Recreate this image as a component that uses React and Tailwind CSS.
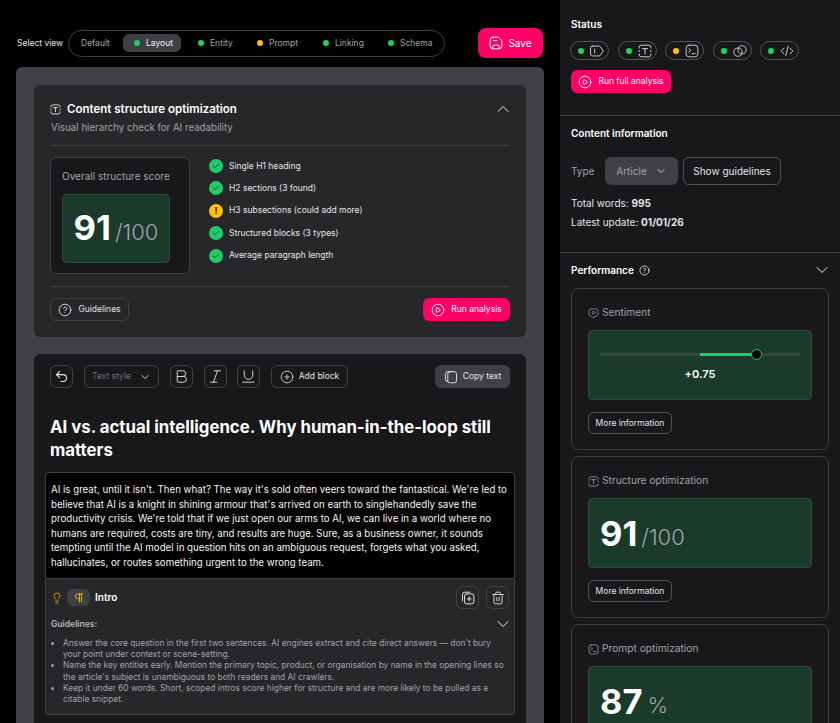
import {
  Undo2,
  Bold,
  Italic,
  Underline,
  CirclePlus,
  ChevronDown,
  ChevronUp,
  CirclePlay,
  CircleHelp,
  Lightbulb,
  Pilcrow,
  Trash2,
  Check,
} from "lucide-react";

function TypeBox({ className }) {
  return (
    <svg viewBox="0 0 24 24" fill="none" stroke="currentColor" strokeWidth="1.7" strokeLinecap="round" className={className}>
      <path d="M2 7V6a4 4 0 0 1 4-4h12a4 4 0 0 1 4 4v1M2 17v1a4 4 0 0 0 4 4h12a4 4 0 0 0 4-4v-1M2 11v2M22 11v2" />
      <path d="M7.500 8h9M12 8v9" />
    </svg>
  );
}

function TerminalBox({ className }) {
  return (
    <svg viewBox="0 0 24 24" fill="none" stroke="currentColor" strokeWidth="1.6" strokeLinecap="round" strokeLinejoin="round" className={className}>
      <rect x="2" y="2" width="20" height="20" rx="5" />
      <path d="m6.500 8 3.500 3-3.500 3M12 16.500h5.500" />
    </svg>
  );
}

function TagBox({ className }) {
  return (
    <svg viewBox="0 0 24 24" fill="none" stroke="currentColor" strokeWidth="1.6" strokeLinecap="round" strokeLinejoin="round" className={className}>
      <path d="M4 3.500h12.500L23 12l-6.500 8.500H4a3 3 0 0 1-3-3v-11a3 3 0 0 1 3-3Z" />
      <path d="M8 8.500v7" />
    </svg>
  );
}

function Rings({ className }) {
  return (
    <svg viewBox="0 0 24 24" fill="none" stroke="currentColor" strokeWidth="1.5" className={className}>
      <circle cx="8.500" cy="14" r="7" />
      <circle cx="15.500" cy="10" r="7" />
    </svg>
  );
}

function CodeMark({ className }) {
  return (
    <svg viewBox="0 0 24 24" fill="none" stroke="currentColor" strokeWidth="1.6" strokeLinecap="round" strokeLinejoin="round" className={className}>
      <path d="m7 7-5 5 5 5M17 7l5 5-5 5M14 4l-4 16" />
    </svg>
  );
}

function HeartBubble({ className }) {
  return (
    <svg viewBox="0 0 24 24" fill="none" stroke="currentColor" strokeWidth="1.6" strokeLinejoin="round" className={className}>
      <path d="M7 2h10a5 5 0 0 1 5 5v7a5 5 0 0 1-5 4h-2l-3 4-3-4H7a5 5 0 0 1-5-4V7a5 5 0 0 1 5-5Z" />
      <path d="M12 14 8.800 10.800a2 2 0 0 1 3.200-2.300 2 2 0 0 1 3.200 2.300Z" />
    </svg>
  );
}

function SaveIcon({ className }) {
  return (
    <svg viewBox="0 0 24 24" fill="none" stroke="currentColor" strokeWidth="1.7" strokeLinecap="round" strokeLinejoin="round" className={className}>
      <path d="M7 2h9l6 6v9a5 5 0 0 1-5 5H7a5 5 0 0 1-5-5V7a5 5 0 0 1 5-5Z" />
      <path d="M7.500 8h6M6.500 22v-3.500a3 3 0 0 1 3-3h5a3 3 0 0 1 3 3V22" />
    </svg>
  );
}

function CopyAdd({ className }) {
  return (
    <svg viewBox="0 0 24 24" fill="none" stroke="currentColor" strokeWidth="1.7" strokeLinecap="round" className={className}>
      <rect x="6" y="5" width="16" height="17" rx="3.500" />
      <path d="M2.500 17V6a4 4 0 0 1 4-4h9M14 10v7M10.500 13.500h7" />
    </svg>
  );
}

function CopyStack({ className }) {
  return (
    <svg viewBox="0 0 24 24" fill="none" stroke="currentColor" strokeWidth="1.6" strokeLinecap="round" className={className}>
      <rect x="6.500" y="3" width="15" height="19" rx="3.500" />
      <path d="M6.500 20A4 4 0 0 1 2.500 16V7.500A5 5 0 0 1 7.500 2.500H15" />
    </svg>
  );
}

const tabs = [
  { label: "Entity", dot: "bg-[#20cf6b]", w: "w-[59px]" },
  { label: "Prompt", dot: "bg-[#ffc107]", w: "w-[66px]" },
  { label: "Linking", dot: "bg-[#20cf6b]", w: "w-[65px]" },
  { label: "Schema", dot: "bg-[#20cf6b]", w: "w-[66px]" },
];

const checks = [
  { label: "Single H1 heading", ok: true },
  { label: "H2 sections (3 found)", ok: true },
  { label: "H3 subsections (could add more)", ok: false },
  { label: "Structured blocks (3 types)", ok: true },
  { label: "Average paragraph length", ok: true },
];

const statusIcons = [
  { icon: TagBox, dot: "bg-[#20cf6b]" },
  { icon: TypeBox, dot: "bg-[#20cf6b]" },
  { icon: TerminalBox, dot: "bg-[#ffc107]" },
  { icon: Rings, dot: "bg-[#20cf6b]" },
  { icon: CodeMark, dot: "bg-[#20cf6b]" },
];

const guidelines = [
  "Answer the core question in the first two sentences. AI engines extract and cite direct answers — don't bury your point under context or scene-setting.",
  "Name the key entities early. Mention the primary topic, product, or organisation by name in the opening lines so the article's subject is unambiguous to both readers and AI crawlers.",
  "Keep it under 60 words. Short, scoped intros score higher for structure and are more likely to be pulled as a citable snippet.",
];

function IconButton({ children }) {
  return (
    <button className="flex h-[23px] w-[23px] items-center justify-center rounded-md border border-[#3f3f46] text-[#e4e4e7]">
      {children}
    </button>
  );
}

function PerfCard({ icon: Icon, title, children }) {
  return (
    <div className="rounded-lg border border-[#3f3f46] px-4 pt-4 pb-[15px]">
      <div className="flex h-4 items-center gap-[3px] text-[10.2px] text-[#a1a1aa]">
        <Icon className="h-[11px] w-[11px]" />
        {title}
      </div>
      <div className="mt-[9px] h-[70px] overflow-hidden rounded border border-[#2f4a3a] bg-[#1a3a2a]">{children}</div>
      <button className="mt-[12px] flex h-[22px] w-[84px] items-center justify-center rounded-md border border-[#52525b] text-[8.5px] text-[#e4e4e7]">
        More information
      </button>
    </div>
  );
}

export default function App() {
  return (
    <div className="flex h-[723px] w-[840px] overflow-hidden bg-black font-['Inter',sans-serif] text-white">
      <div className="w-[560px] shrink-0 pl-4 pr-4 pt-7">
        <div className="flex h-[30px] items-center">
          <span className="w-[52px] pl-[1px] text-[8.5px] text-[#e4e4e7]">Select view</span>
          <div className="flex h-[27px] w-[377px] items-center rounded-[14px] border border-[#3f3f46] pl-1 text-[8.5px] text-[#a1a1aa]">
            <span className="w-[50px] pl-[8px]">Default</span>
            <span className="flex h-[18px] w-[58px] items-center gap-[6px] rounded-md bg-[#3f3f46] pl-[11px] text-[#f4f4f5]">
              <span className="h-[6px] w-[6px] rounded-full bg-[#20cf6b]" />
              Layout
            </span>
            {tabs.map((t) => (
              <span key={t.label} className={`flex items-center gap-[6px] pl-[17px] ${t.w}`}>
                <span className={`h-[6px] w-[6px] shrink-0 rounded-full ${t.dot}`} />
                {t.label}
              </span>
            ))}
          </div>
          <button className="mr-[1px] ml-auto flex h-[30px] w-[65px] items-center justify-center gap-[5px] rounded-lg bg-[#ff0066] text-[10px]">
            <SaveIcon className="h-[14px] w-[14px]" />
            Save
          </button>
        </div>

        <div className="mt-[9px] h-[700px] rounded-md bg-[#3f4046] px-[18px] pt-[18px]">
          <div className="h-[252px] rounded-md bg-[#27272a] px-4 pt-4">
            <div className="flex h-4 items-center">
              <TypeBox className="h-[11px] w-[11px]" />
              <span className="ml-[6px] text-[11.5px] leading-4 font-semibold">Content structure optimization</span>
              <ChevronUp className="ml-auto -mr-[3px] h-5 w-5 shrink-0" strokeWidth={1.1} />
            </div>
            <p className="mt-1 pl-px text-[9.7px] leading-[14px] text-[#a1a1aa]">Visual hierarchy check for AI readability</p>
            <div className="mt-[10px] border-t border-[#3f3f46]" />

            <div className="mt-[11px] flex h-[117px]">
              <div className="h-[117px] w-[140px] rounded-md border border-[#3f3f46] bg-[#18181b] px-[11px] pt-[11px]">
                <div className="text-[10px] leading-[14px] text-[#a1a1aa]">Overall structure score</div>
                <div className="mt-[11px] flex h-[69px] w-[108px] items-center justify-center rounded-sm border border-[#2f4a3a] bg-[#1a3a2a]">
                  <span className="text-[34.5px] leading-none font-bold">91</span>
                  <span className="ml-[4px] mt-[6px] text-[22px] leading-none font-light text-[#a1a1aa]">/100</span>
                </div>
              </div>
              <div className="ml-[19px] flex flex-col gap-[8.4px] pt-[2px]">
                {checks.map((c) => (
                  <div key={c.label} className="flex h-[14px] items-center gap-[6px] text-[8.5px] text-[#e4e4e7]">
                    {c.ok ? (
                      <span className="flex h-[14px] w-[14px] items-center justify-center rounded-full bg-[#20cc69] text-[#14532d]">
                        <Check className="h-[8px] w-[8px]" strokeWidth={3} />
                      </span>
                    ) : (
                      <span className="flex h-[14px] w-[14px] items-center justify-center rounded-full bg-[#ffc107] text-[9px] font-bold text-[#27272a]">
                        !
                      </span>
                    )}
                    {c.label}
                  </div>
                ))}
              </div>
            </div>

            <div className="mt-[12px] border-t border-[#3f3f46]" />
            <div className="mt-[11px] flex justify-between">
              <button className="flex h-[23px] w-[79px] items-center justify-center gap-[6px] rounded-md border border-[#3f3f46] text-[8.5px] text-[#e4e4e7]">
                <CircleHelp className="h-[14px] w-[14px]" strokeWidth={1.5} />
                Guidelines
              </button>
              <button className="flex h-[23px] w-[87px] items-center justify-center gap-[6px] rounded-md bg-[#ff0066] text-[8.5px]">
                <CirclePlay className="h-[14px] w-[14px]" strokeWidth={1.5} />
                Run analysis
              </button>
            </div>
          </div>

          <div className="mt-[17px] h-[500px] rounded-md bg-[#18181b] px-[11px] pt-[11px]">
            <div className="flex h-[23px] items-center px-[5px]">
              <IconButton>
                <Undo2 className="h-[15px] w-[15px]" strokeWidth={1.7} />
              </IconButton>
              <button className="ml-[11px] flex h-[23px] w-[75px] items-center justify-center gap-[8px] rounded-md border border-[#3f3f46] text-[8.5px] text-[#71717a]">
                Text style
                <ChevronDown className="h-[12px] w-[12px] text-[#e4e4e7]" strokeWidth={1.7} />
              </button>
              <div className="ml-[11px]">
                <IconButton>
                  <Bold className="h-[17px] w-[17px]" strokeWidth={1.3} />
                </IconButton>
              </div>
              <div className="ml-[11px]">
                <IconButton>
                  <Italic className="h-[17px] w-[17px]" strokeWidth={1.3} />
                </IconButton>
              </div>
              <div className="ml-[10px]">
                <IconButton>
                  <Underline className="h-[17px] w-[17px]" strokeWidth={1.3} />
                </IconButton>
              </div>
              <button className="ml-[11px] flex h-[23px] w-[77px] items-center justify-center gap-[5px] rounded-md border border-[#3f3f46] text-[8.5px] text-[#e4e4e7]">
                <CirclePlus className="h-[14px] w-[14px]" strokeWidth={1.4} />
                Add block
              </button>
              <button className="ml-auto flex h-[23px] w-[75px] items-center justify-center gap-[5px] rounded-md bg-[#3f4046] text-[8.5px] text-[#e4e4e7]">
                <CopyStack className="h-[14px] w-[14px]" />
                Copy text
              </button>
            </div>

            <h1 className="mt-[28px] px-[5px] text-[16.8px] leading-[23px] font-bold">
              AI vs. actual intelligence. Why human-in-the-loop still matters
            </h1>

            <div className="mt-[10px] h-[107px] rounded-t-sm border border-[#3f3f46] bg-black px-[5px] pt-[10px] text-[9.7px] leading-[14.6px] text-[#f4f4f5]">
              AI is great, until it isn't. Then what? The way it's sold often veers toward the fantastical. We're led to believe that AI is a knight in shining armour that's arrived on earth to singlehandedly save the productivity crisis. We're told that if we just open our arms to AI, we can live in a world where no humans are required, costs are tiny, and results are huge. Sure, as a business owner, it sounds tempting until the AI model in question hits on an ambiguous request, forgets what you asked, hallucinates, or routes something urgent to the wrong team.
            </div>

            <div className="h-[136px] rounded-b-sm border border-t-0 border-[#3f3f46] bg-[#27272a] px-[5px]">
              <div className="flex h-[37px] items-center">
                <Lightbulb className="h-[12px] w-[12px] text-[#eab308]" strokeWidth={1.6} />
                <span className="ml-[4px] flex h-[17px] w-[23px] items-center justify-center rounded-md bg-[#3f3f46] text-[#eab308]">
                  <Pilcrow className="h-[12px] w-[12px]" strokeWidth={2} />
                </span>
                <span className="ml-[5px] text-[10px] font-semibold">Intro</span>
                <div className="ml-auto flex gap-[7px]">
                  <IconButton>
                    <CopyAdd className="h-[14px] w-[14px]" />
                  </IconButton>
                  <IconButton>
                    <Trash2 className="h-[14px] w-[14px]" strokeWidth={1.5} />
                  </IconButton>
                </div>
              </div>
              <div className="mt-px flex h-[14px] items-center justify-between">
                <span className="text-[8.5px] font-semibold text-[#b4b4b8]">Guidelines:</span>
                <ChevronDown className="-mr-[4px] h-5 w-5 shrink-0" strokeWidth={1.1} />
              </div>
              <ul className="mt-[7px] list-disc pl-[12px] text-[8.4px] leading-[11.2px] text-[#a1a1aa]">
                {guidelines.map((g) => (
                  <li key={g}>{g}</li>
                ))}
              </ul>
            </div>
          </div>
        </div>
      </div>

      <div className="w-[280px] shrink-0 bg-[#18181b]">
        <div className="h-[116px] border-b border-[#3f3f46] px-[11px] pt-[17px]">
          <div className="text-[10px] leading-[14px] font-semibold">Status</div>
          <div className="mt-[10px] -ml-px flex gap-[8.5px]">
            {statusIcons.map((s, i) => {
              const Icon = s.icon;
              return (
                <span key={i} className="flex h-[19px] w-[39px] items-center gap-[6px] rounded-full border border-[#52525b] pl-[7px] text-[#d4d4d8]">
                  <span className={`h-[6px] w-[6px] rounded-full ${s.dot}`} />
                  <Icon className="h-[14px] w-[14px]" />
                </span>
              );
            })}
          </div>
          <button className="mt-[10px] flex h-[23px] w-[100px] items-center justify-center gap-[6px] rounded-md bg-[#ff0066] text-[8.5px]">
            <CirclePlay className="h-[14px] w-[14px]" strokeWidth={1.5} />
            Run full analysis
          </button>
        </div>

        <div className="h-[137px] border-b border-[#3f3f46] px-[11px] pt-[10px]">
          <div className="text-[10px] leading-[14px] font-semibold">Content information</div>
          <div className="mt-[17px] flex items-center">
            <span className="w-[34px] text-[10px] text-[#a1a1aa]">Type</span>
            <button className="flex h-[28px] w-[73px] items-center justify-center gap-[8px] rounded-md bg-[#3f4046] text-[10px] text-[#a1a1aa]">
              Article
              <ChevronDown className="h-[12px] w-[12px] text-[#e4e4e7]" strokeWidth={1.7} />
            </button>
            <button className="ml-[5px] flex h-[28px] w-[98px] items-center justify-center rounded-md border border-[#52525b] text-[10px] text-[#e4e4e7]">
              Show guidelines
            </button>
          </div>
          <div className="mt-[11px] text-[10px] leading-[14px] text-[#e4e4e7]">
            Total words: <b className="font-bold">995</b>
          </div>
          <div className="mt-[5px] text-[10px] leading-[14px] text-[#e4e4e7]">
            Latest update: <b className="font-bold">01/01/26</b>
          </div>
        </div>

        <div className="px-[11px] pt-[9px]">
          <div className="flex h-[16px] items-center">
            <span className="text-[10px] font-semibold">Performance</span>
            <CircleHelp className="ml-[5px] h-[11px] w-[11px]" strokeWidth={1.6} />
            <ChevronDown className="ml-auto -mr-[3px] h-5 w-5 shrink-0" strokeWidth={1.1} />
          </div>
          <div className="mt-[10px] flex flex-col gap-[6px]">
            <PerfCard icon={HeartBubble} title="Sentiment">
              <div className="px-[10px] pt-[22px]">
                <div className="relative h-[3px] rounded-full bg-[#33493d]">
                  <div className="absolute left-[101px] top-0 h-[3px] w-[57px] bg-[#20cf6b]" />
                  <div className="absolute left-[152px] top-[-4px] h-[11px] w-[11px] rounded-full border-[1.5px] border-[#20cf6b] bg-black" />
                </div>
                <div className="mt-[10px] text-center text-[11px] font-semibold">+0.75</div>
              </div>
            </PerfCard>
            <PerfCard icon={TypeBox} title="Structure optimization">
              <div className="flex h-full items-center pl-[11px] pt-[2px]">
                <span className="text-[34.5px] leading-none font-bold">91</span>
                <span className="ml-[4px] mt-[6px] text-[22px] leading-none font-light text-[#a1a1aa]">/100</span>
              </div>
            </PerfCard>
            <PerfCard icon={TerminalBox} title="Prompt optimization">
              <div className="flex h-full items-center pl-[11px] pt-[2px]">
                <span className="text-[34.5px] leading-none font-bold">87</span>
                <span className="ml-[5px] mt-[6px] text-[22px] leading-none font-light text-[#a1a1aa]">%</span>
              </div>
            </PerfCard>
          </div>
        </div>
      </div>
    </div>
  );
}
